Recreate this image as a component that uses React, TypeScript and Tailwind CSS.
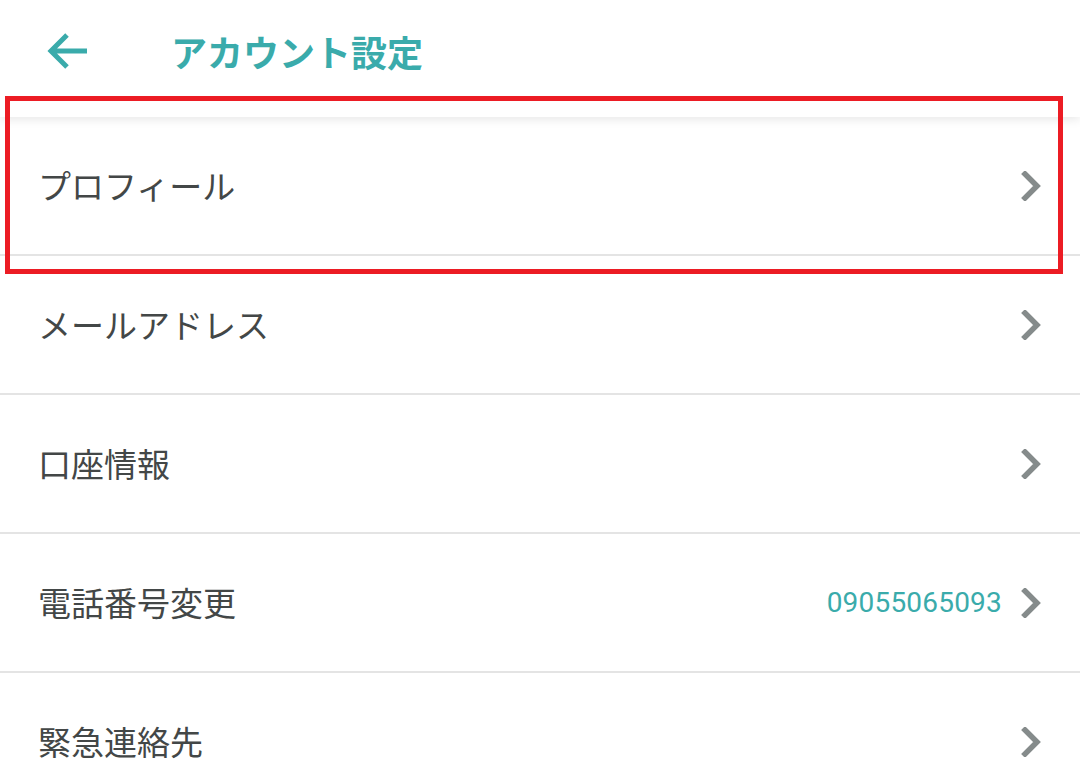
const rows: { label: string; value?: string }[] = [
  { label: 'プロフィール' },
  { label: 'メールアドレス' },
  { label: '口座情報' },
  { label: '電話番号変更', value: '09055065093' },
  { label: '緊急連絡先' },
]

const jp = { fontFamily: '"Noto Sans CJK JP", "Noto Sans", sans-serif' }

function Chevron() {
  return (
    <svg width="22" height="30" viewBox="0 0 22 30" className="shrink-0">
      <path d="M4 3 L16 15 L4 27" fill="none" stroke="#858b8b" strokeWidth="5.5" strokeLinecap="square" strokeLinejoin="miter" />
    </svg>
  )
}

function Row({ label, value }: { label: string; value?: string }) {
  return (
    <div className="h-[139px] flex items-center pl-[38px] pr-[37px] border-b-2 border-[#e4e4e4] bg-white">
      <span className="text-[33px] text-[#434747] leading-none" style={jp}>{label}</span>
      <div className="ml-auto flex items-center gap-[19px]">
        {value && (
          <span className="text-[28px] text-[#3aabab] leading-none tracking-[0.2px]" style={{ fontFamily: 'Roboto, sans-serif' }}>
            {value}
          </span>
        )}
        <Chevron />
      </div>
    </div>
  )
}

export default function App() {
  return (
    <div className="relative w-[1080px] h-[779px] overflow-hidden bg-white">
      <header className="relative z-10 h-[117px] flex items-center bg-white shadow-[0_2px_10px_rgba(0,0,0,0.10)]">
        <div className="w-[171px] pl-[45px] pb-[15px] flex items-center">
          <svg width="44" height="42" viewBox="0 0 44 42">
            <path d="M42 21 H8 M22 5 L6 21 L22 37" fill="none" stroke="#3aabab" strokeWidth="5" strokeLinecap="butt" />
          </svg>
        </div>
        <h1 className="pb-[16px] text-[36px] font-bold text-[#3aabab] leading-none" style={jp}>アカウント設定</h1>
      </header>
      <div>
        {rows.map((r) => (
          <Row key={r.label} {...r} />
        ))}
      </div>
      <div className="absolute left-[5px] top-[96px] w-[1058px] h-[178px] border-[5px] border-[#ec1c24] z-20 pointer-events-none" />
    </div>
  )
}
